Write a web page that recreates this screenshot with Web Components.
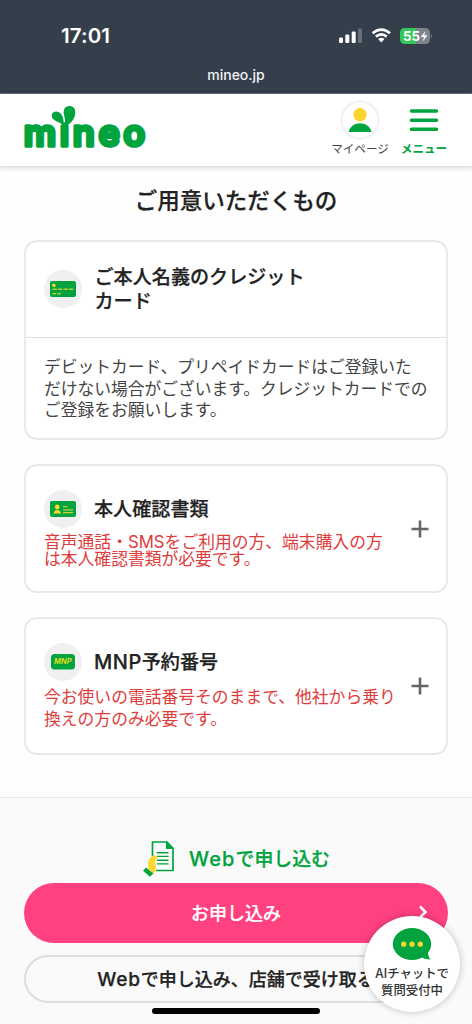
<!DOCTYPE html>
<html lang="ja">
<head>
<meta charset="utf-8">
<title>mineo</title>
<style>
html,body{margin:0;padding:0}
body{width:472px;height:1024px;overflow:hidden;background:#fefefe;color:#222;font-family:"Inter","Noto Sans CJK JP",sans-serif}
</style>
</head>
<body>
<mineo-page></mineo-page>
<script>
function define(name, html){
  const t=document.createElement('template');t.innerHTML=html;
  customElements.define(name,class extends HTMLElement{
    constructor(){super();this.attachShadow({mode:'open'}).appendChild(t.content.cloneNode(true));}
  });
}
define('status-bar',`<style>
:host{display:block;height:93px;background:#353f4c;border-bottom:1px solid #66707b;color:#fff;box-sizing:content-box}
.row{display:flex;justify-content:space-between;align-items:center;height:71px;padding:0 39px 0 61px;box-sizing:border-box}
.time{font-size:20.5px;font-weight:600;letter-spacing:.1px}
.icons{display:flex;align-items:center}
.url{text-align:center;font-size:14px;line-height:18px;margin-top:-5px;font-weight:500;color:#f1f2f4}
svg{display:block}
</style>
<div class="row"><span class="time">17:01</span>
<div class="icons">
<svg width="94" height="20" viewBox="0 0 94 20"><g fill="#fff"><rect x="0" y="11.5" width="4" height="5.5" rx="1.2"/><rect x="6.3" y="8.6" width="4" height="8.4" rx="1.2"/><rect x="12.7" y="5.6" width="4" height="11.4" rx="1.2"/><rect x="19" y="2.5" width="4" height="14.5" rx="1.2" opacity=".25"/></g>
<g fill="none" stroke="#fff" stroke-width="2.7"><path d="M33.6 7.2Q42.3 -.1 51 7.2"/><path d="M36.9 10.6Q42.3 6 47.7 10.6"/></g><path d="M39.2 13Q42.3 10.6 45.4 13L42.3 16.4Z" fill="#fff"/>
<path d="M66 2H77V18H66Q61 18 61 13V7Q61 2 66 2Z" fill="#34c759"/><path d="M77 2H86Q91 2 91 7V13Q91 18 86 18H77Z" fill="#7c848d"/><path d="M92 8Q94 10 92 12Z" fill="#7c848d"/>
<text x="64" y="14.9" font-family="Inter" font-size="13.5" font-weight="700" fill="#fff" textLength="17" lengthAdjust="spacingAndGlyphs">55</text><path d="M86.3 5L81.8 11H85L83.8 15.6L88.5 9.3H85.3Z" fill="#fff"/></svg>
</div></div><div class="url">mineo.jp</div>`);

define('mineo-logo',`<style>:host{display:block;width:121px;height:52px}svg{display:block;overflow:visible}</style>
<svg width="121" height="52" viewBox="0 0 121 52"><defs><clipPath id="c"><rect x="-2" y="16.5" width="125" height="35"/></clipPath></defs>
<g clip-path="url(#c)"><text x="-.3" y="40.1" font-family="Inter" font-weight="600" font-size="36" fill="#00a33e" stroke="#00a33e" stroke-width="3.6" stroke-linejoin="round" textLength="121.5" lengthAdjust="spacing">mineo</text></g>
<path d="M39.5 20C37 15.8 31 16 28.3 12C26.6 8.8 28.8 5.5 32.2 5.6C38.6 6 40.2 13 39.5 20Z" fill="#00a33e"/><path d="M39.8 20C43.6 13.5 37.8 8 40.3 2.9C42.5-.9 49-.9 50.9 3.5C53 11 46.8 19.3 39.8 20Z" fill="#00a33e"/></svg>`);

define('site-header',`<style>
:host{display:flex;position:relative;box-sizing:border-box;height:72px;padding:12px 24px 0;justify-content:space-between;background:#fff;box-shadow:0 1px 5px 1px rgba(0,0,0,.16)}
nav{display:flex;margin-top:-6px;gap:11px}
.item{display:flex;flex-direction:column;align-items:center;font-size:11.6px;line-height:16px;white-space:nowrap;color:#444}
.item svg{display:block}.menu{color:#00a33e;font-weight:700}
.me{width:58px}.menu{width:48px}
</style>
<mineo-logo></mineo-logo>
<nav><div class="item me"><svg width="42" height="41" viewBox="0 0 42 41"><circle cx="21" cy="20" r="18.6" fill="#fff" stroke="#eee" stroke-width="1.6"/><circle cx="21" cy="14.7" r="6.7" fill="#ffd62f"/><path d="M9.6 32C12 20.3 30 20.3 32.5 32Z" fill="#00a33e"/></svg><span>マイページ</span></div>
<div class="item menu"><svg width="30" height="41"><g stroke="#00a33e" stroke-width="3.6" stroke-linecap="round"><path d="M2.5 11H27.5M2.5 20.3H27.5M2.5 29.2H27.5"/></g></svg><span>メニュー</span></div></nav>`);

define('round-icon',`<style>:host{display:grid;place-items:center;width:38px;height:38px;border-radius:50%;background:#f0f0f0;flex:none}::slotted(svg){display:block}</style><slot></slot>`);

define('open-card',`<style>
:host{display:block;box-sizing:border-box;border:2px solid #e9e9e9;border-radius:13px;background:#fff;height:200px}
.top{padding:0 18px 2px;height:96px;box-sizing:border-box;display:flex;align-items:center;gap:12.5px;border-bottom:1px solid #dedede}
h2{font-size:19.1px;line-height:24px;font-weight:500;margin:0;white-space:nowrap;-webkit-text-stroke:.25px #222}
.body{padding:19px 18px;font-size:16.75px;line-height:21.7px;white-space:nowrap;color:#444}
</style><div class="top"><slot name="icon"></slot><h2><slot name="title"></slot></h2></div><div class="body"><slot></slot></div>`);

define('fold-card',`<style>
:host{display:flex;justify-content:space-between;align-items:center;box-sizing:border-box;border:2px solid #e9e9e9;border-radius:13px;background:#fff;padding:0 17px 0 18px;height:var(--h)}
.main{display:flex;flex-direction:column}
.head{display:flex;align-items:center;gap:12px;height:38px}
h2{font-size:19.1px;line-height:24px;font-weight:500;margin:0;white-space:nowrap;-webkit-text-stroke:.25px #222}
.note{color:#e03c3c;font-size:16.8px;line-height:var(--lh);margin-top:var(--gap);white-space:nowrap}
svg{display:block;flex:none}
</style><div class="main"><div class="head"><slot name="icon"></slot><h2><slot name="title"></slot></h2></div><div class="note"><slot></slot></div></div>
<svg width="18" height="18"><path d="M9 .5V17.5M.5 9H17.5" stroke="#666" stroke-width="2.6"/></svg>`);

define('apply-section',`<style>
:host{display:block;box-sizing:border-box;height:227px;border-top:1px solid #e6e6e6;background:#fafafa;padding:42px 24px 0}
.lead{display:flex;align-items:center;gap:13px;height:38px;padding-left:118px;color:#00a33e;font-size:18.9px;font-weight:500;-webkit-text-stroke:.25px #00a33e;white-space:nowrap}
.lead span{margin-top:-3px}
b{font-weight:500;font-size:1.06em;line-height:1}
.lead b{letter-spacing:1.1px}
.btn{display:flex;align-items:center;justify-content:center;box-sizing:border-box;white-space:nowrap;font-size:18px;font-weight:500;position:relative}
.pink{height:60px;margin-top:5px;border-radius:30px;background:#ff417f;color:#fff;-webkit-text-stroke:.2px #fff}
.btn span{margin-top:-2px}
.pink svg{position:absolute;right:20px;top:22px}
.line{height:48px;margin-top:12px;border:2px solid #ddd;border-radius:24px;color:#222;-webkit-text-stroke:.25px #222}
.line b{letter-spacing:.7px}
.bar{width:168px;height:6px;border-radius:3px;background:#000;margin:5px auto 0}
</style>
<div class="lead"><svg width="34" height="38" viewBox="0 0 34 38"><path d="M10.5 16V2H25L31 8.3V30.5H14" fill="none" stroke="#00a33e" stroke-width="1.7" stroke-linejoin="round"/><path d="M24 1.3V9H31.5Z" fill="#00a33e"/><path d="M15.3 12.7H26M15.3 16.4H26M15.3 20.2H26M15.3 23.9H26" stroke="#00a33e" stroke-width="1.4" stroke-linecap="round"/><path d="M15.7 16.8C15.5 19 13.6 18.8 13.1 21C12.4 25 16.2 27.5 11.5 34L5.7 28.2C7.5 25.4 4.8 22 7.7 18.5C10 15.5 13 14.6 15.7 16.8Z" fill="#ffd62f"/><path d="M4 27.5L11.3 33.6L8 36.8L1 30.7Z" fill="#00a33e"/></svg><span><b>Web</b>で申し込む</span></div>
<div class="btn pink"><span>お申し込み</span><svg width="10" height="14" viewBox="0 0 10 14"><path d="M2 1.5L7.5 7L2 12.5" fill="none" stroke="#fff" stroke-width="2.5"/></svg></div>
<div class="btn line"><span><b>Web</b>で申し込み、店舗で受け取る</span></div>
<div class="bar"></div>`);

define('chat-bubble',`<style>
:host{display:flex;flex-direction:column;align-items:center;box-sizing:border-box;width:96px;height:96px;border-radius:50%;background:#fff;box-shadow:0 0 7px rgba(0,0,0,.25);padding-top:12px;color:#333;font-size:12.4px;line-height:16.5px;font-weight:500;text-align:center;white-space:nowrap}
svg{display:block;margin-bottom:5px}
</style><svg width="40" height="33" viewBox="0 0 40 33"><ellipse cx="20" cy="16" rx="19.2" ry="16" fill="#00a33e"/><path d="M36 22Q35.5 28 38.5 31.5Q32 31.5 28 28Z" fill="#00a33e"/><g fill="#ffd62f"><circle cx="11.7" cy="16.2" r="2.6"/><circle cx="20" cy="16.2" r="2.6"/><circle cx="28.3" cy="16.2" r="2.6"/></g></svg><slot></slot>`);

define('mineo-page',`<style>
:host{display:flex;flex-direction:column;position:relative;width:472px;height:1024px;overflow:hidden}
h1{font-size:22.5px;line-height:30px;height:30px;text-align:center;font-weight:500;-webkit-text-stroke:.25px #222;margin:20px 0 24px}
.cards{display:flex;flex-direction:column;gap:24px;padding:0 24px;flex:1}
chat-bubble{position:absolute;left:364px;top:916px}
.id{--h:129px;--lh:17px;--gap:6px}
.mnp{--h:138px;--lh:22px;--gap:5px}
.latin{font-size:20px;line-height:1;letter-spacing:.5px}
</style>
<status-bar></status-bar><site-header></site-header>
<h1>ご用意いただくもの</h1>
<div class="cards">
<open-card><round-icon slot="icon"><svg width="26" height="16" viewBox="0 0 26 16"><rect width="26" height="16" rx="2" fill="#00a33e"/><rect x="2.3" y="2.7" width="3.2" height="3.2" rx="1" fill="#ffd62f"/><path d="M2.5 8.3H24" stroke="#b8cf35" stroke-width="1.6" stroke-dasharray="4.3 1.2"/><path d="M2.5 12.7H11" stroke="#b8cf35" stroke-width="1.4" stroke-dasharray="3.5 1.2"/></svg></round-icon><span slot="title">ご本人名義のクレジット<br>カード</span>デビットカード、プリペイドカードはご登録いた<br>だけない場合がございます。クレジットカードでの<br>ご登録をお願いします。</open-card>
<fold-card class="id"><round-icon slot="icon"><svg width="26" height="16" viewBox="0 0 26 16"><rect width="26" height="16" rx="2" fill="#00a33e"/><circle cx="7.2" cy="6" r="2.4" fill="#ffd62f"/><path d="M3.5 12.5Q4 9 7.2 9Q10.5 9 11 12.5Z" fill="#ffd62f"/><path d="M13 5.6H17.5M13 8.9H23M13 11.7H23" stroke="#c4d333" stroke-width="1.2"/></svg></round-icon><span slot="title">本人確認書類</span>音声通話・SMSをご利用の方、端末購入の方<br>は本人確認書類が必要です。</fold-card>
<fold-card class="mnp"><round-icon slot="icon"><svg width="24" height="16" viewBox="0 0 24 16"><rect width="24" height="15.5" rx="3.5" fill="#00a33e"/><text x="3" y="10.2" font-family="Inter" font-weight="700" font-style="italic" font-size="7" fill="#dcdc20" textLength="17.5" lengthAdjust="spacingAndGlyphs">MNP</text></svg></round-icon><span slot="title"><span class="latin">MNP</span>予約番号</span>今お使いの電話番号そのままで、他社から乗り<br>換えの方のみ必要です。</fold-card>
</div>
<apply-section></apply-section>
<chat-bubble>AIチャットで<br>質問受付中</chat-bubble>`);
</script>
</body>
</html>
